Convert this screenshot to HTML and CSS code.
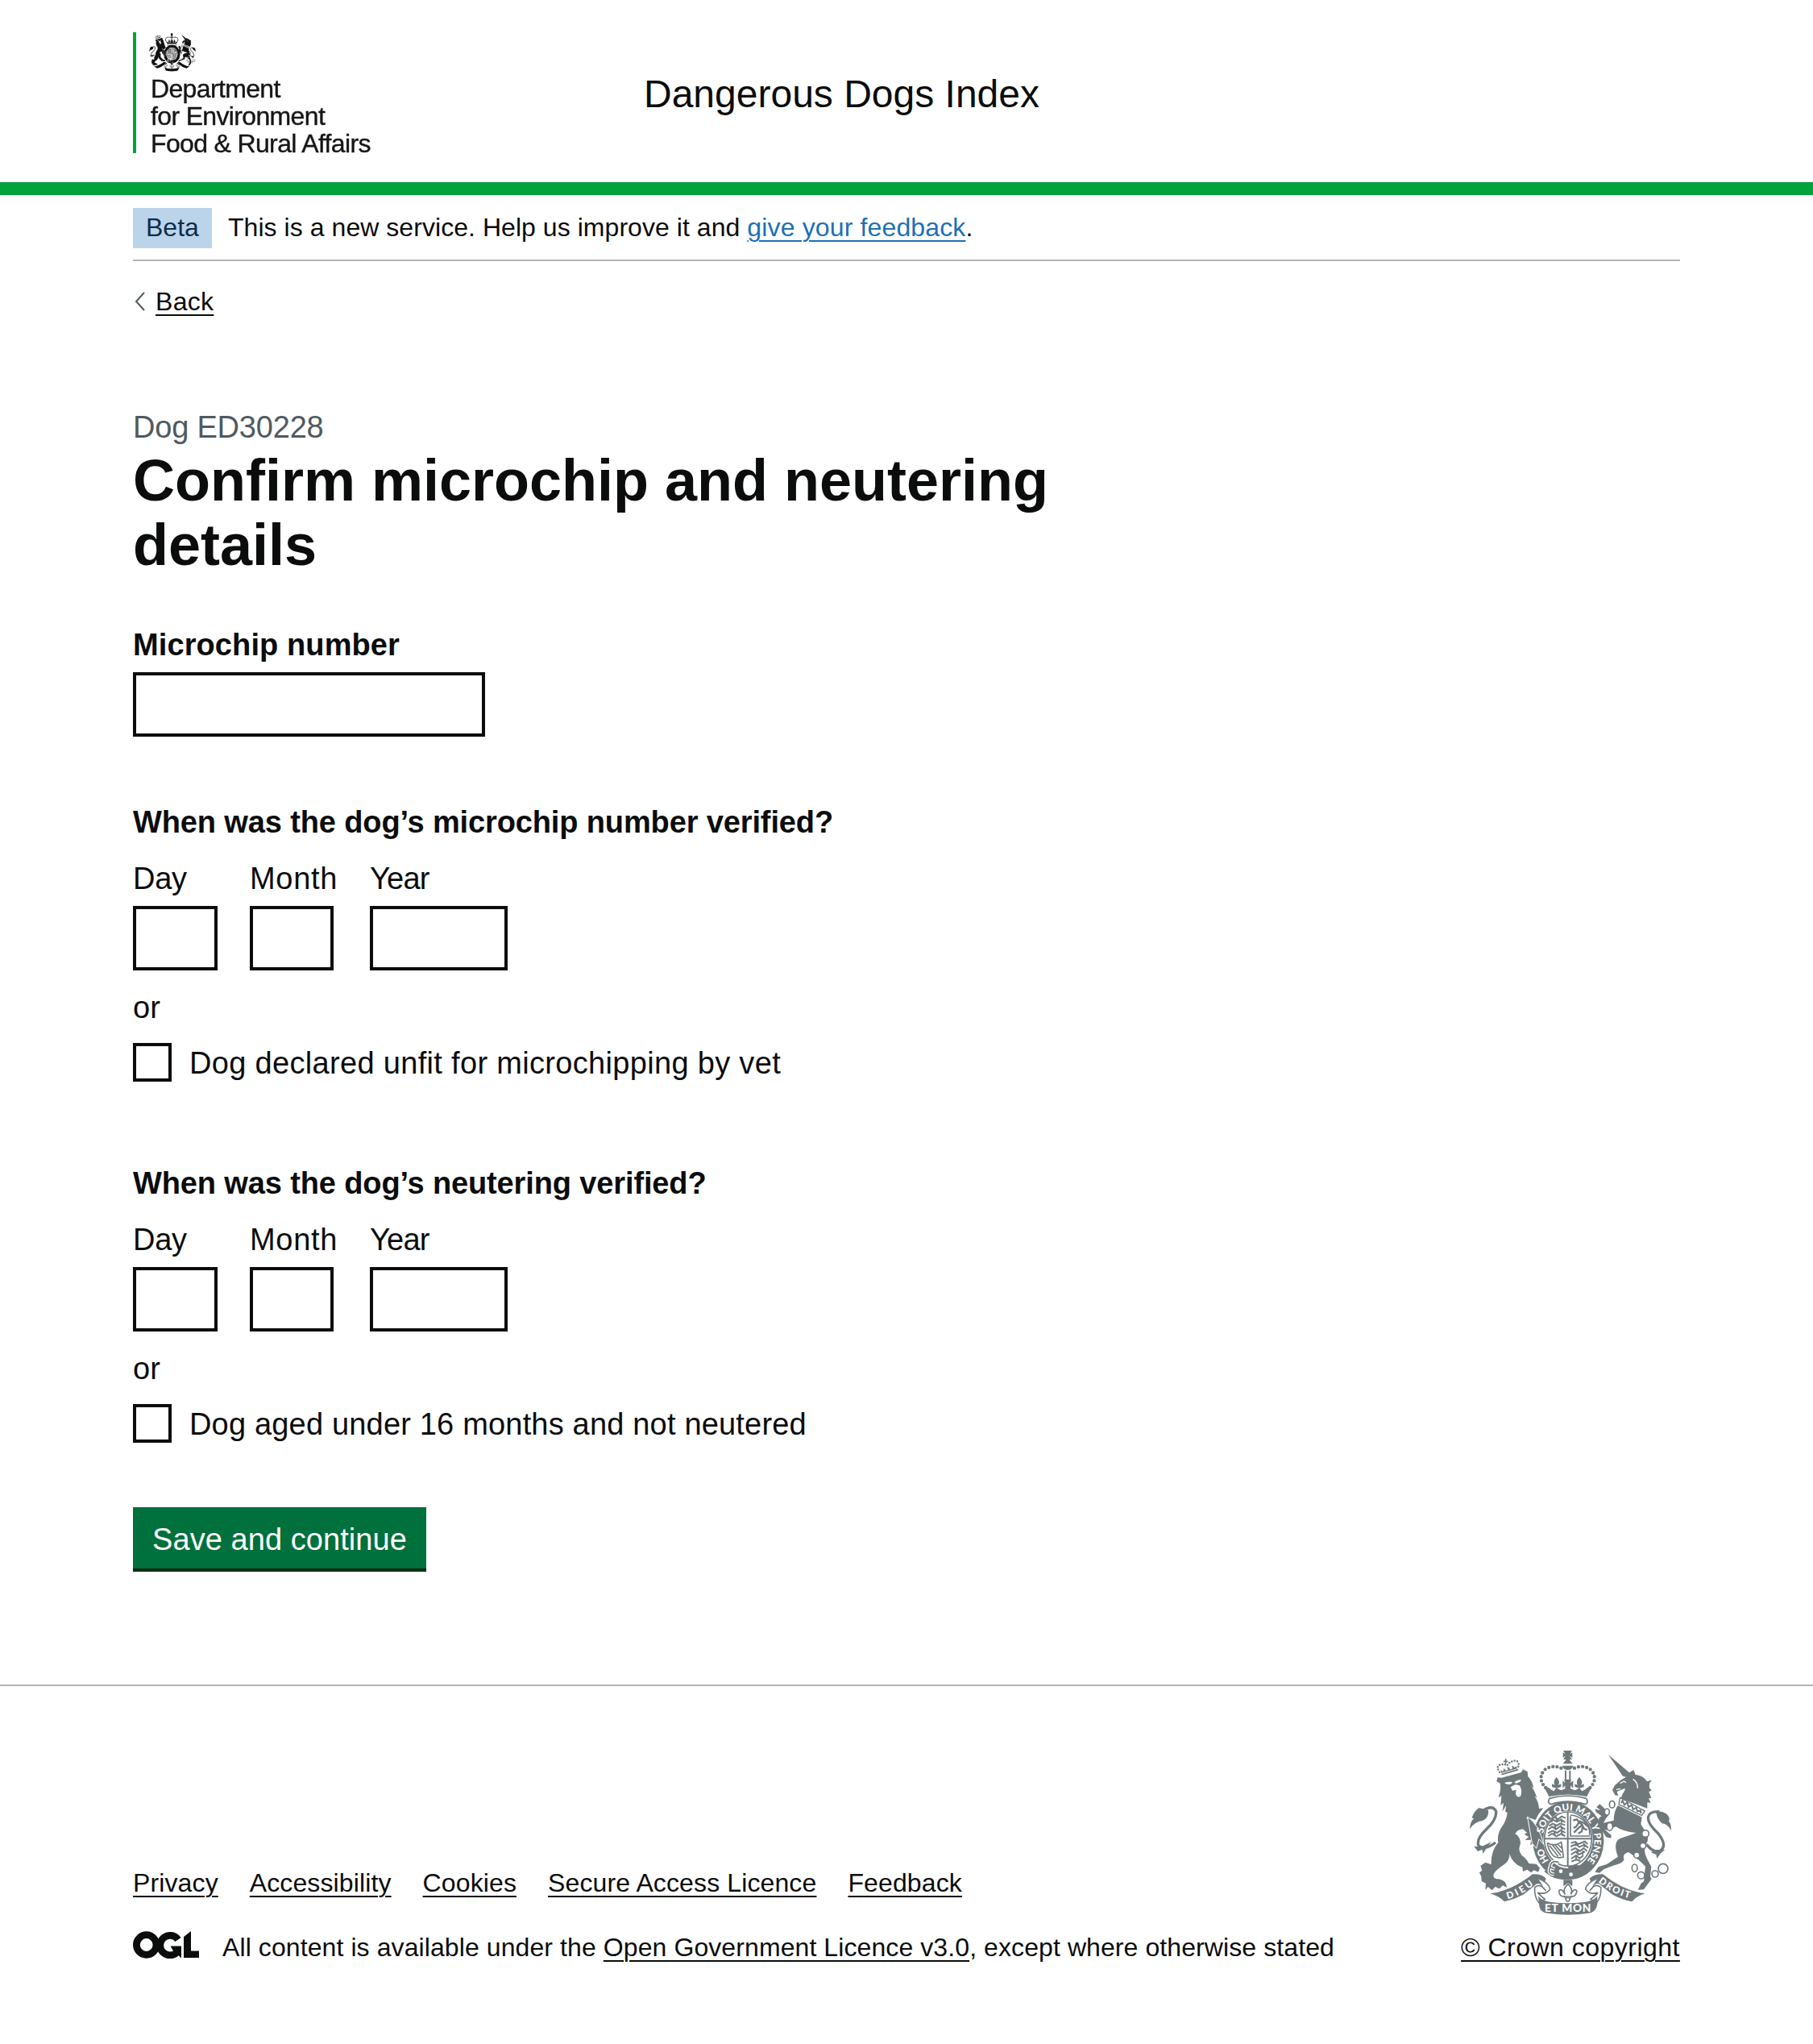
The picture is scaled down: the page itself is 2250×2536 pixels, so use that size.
FILE: index.html
```html
<!DOCTYPE html>
<html lang="en">
<head>
<meta charset="utf-8">
<title>Confirm microchip and neutering details - Dangerous Dogs Index</title>
<link rel="stylesheet" href="styles.css">
</head>
<body>
<svg class="defs" aria-hidden="true">
  <symbol id="arms" viewBox="42 36 750 612">
    <!-- lion -->
    <path fill="currentColor" d="M142 150L146 136L160 137L234 117L240 106L257 114L259 133Q275 148 280 176L270 167Q286 188 292 212L282 203Q299 226 300 252L316 250Q296 272 287 294L258 284Q300 318 311 350L317 378L308 392L297 376L290 398L280 380L268 388L270 368L248 369L262 357L240 346L256 343L240 328Q215 332 213 345Q238 368 228 392Q222 410 236 426Q255 440 262 456L290 458L303 473L297 488L281 481L270 490L256 479L240 486L238 470L220 462Q190 440 189 408Q196 442 170 460Q132 485 130 500Q130 514 150 514Q178 518 180 546L165 538L152 550L137 543L125 556L110 543L100 555L102 530L86 522L85 505L78 490L88 482L82 465L100 452L122 460Q120 410 148 378Q143 352 158 325Q178 300 182 268L174 262L178 240L164 262L168 230L157 240L160 205L149 210Q160 180 155 158Z"/>
    <g fill="#fff"><path d="M171 156Q185 150 201 153L196 160Q182 165 171 156ZM208 153Q220 144 234 144Q230 155 214 158Z"/><path d="M194 172L212 162L228 166L232 175Q238 196 230 207Q216 212 213 196L215 182L201 185Z"/></g>
    <path d="M254 286Q290 305 309 348M212 345L248 348" fill="none" stroke="#fff" stroke-width="4"/>
    <path d="M160 125L222 107" stroke="currentColor" stroke-width="5"/>
    <path fill="currentColor" d="M159 119L157 108L166 114L170 101L176 111L185 107L181 97L190 99L191 106L200 104L200 90L209 99L216 94L219 103Z"/>
    <path d="M153 116Q137 92 158 88L172 86Q176 90 181 91L186 84Q212 65 222 79Q228 92 219 100" fill="none" stroke="currentColor" stroke-width="7.5" stroke-linecap="round" stroke-dasharray="0 10.5"/>
    <path d="M176 66V84M168 76H184" stroke="currentColor" stroke-width="5"/>
    <path d="M85 263Q128 234 140 262Q143 292 105 328Q65 365 75 390Q100 408 138 378" fill="none" stroke="currentColor" stroke-width="10"/>
    <path fill="currentColor" d="M42 328Q44 299 57 289L50 286Q58 260 77 249L111 258Q114 285 90 297Q60 300 42 328ZM58 392L85 394L122 376L104 400L92 419L88 404L72 411Z"/>
    <!-- unicorn -->
    <path fill="currentColor" d="M558 51L636 118L652 108L659 126Q688 128 702 151L720 145Q706 160 712 176L719 184L709 190L718 212L708 214L716 230L703 229L703 251L604 214L612 196Q622 182 620 176L590 189L595 204L583 202L573 183L582 165L606 145L624 134L612 131Z"/>
    <path d="M602 158L616 150L624 155M588 181L604 178M650 142Q668 154 667 176" fill="none" stroke="#fff" stroke-width="4"/>
    <path d="M602 211L694 261L682 277L597 236Z" fill="#fff" stroke="currentColor" stroke-width="4"/>
    <path d="M606 231L611 222L618 238L629 228L633 246L645 238L650 255L662 248L666 262L678 259L679 270" fill="none" stroke="currentColor" stroke-width="6"/>
    <path fill="currentColor" d="M594 240L683 284L679 310Q694 335 704 348Q710 371 695 390Q687 412 707 448L718 468L714 505L719 514L690 553L668 554L680 530L690 523L696 467Q654 426 633 414Q608 421 617 442Q609 458 575 464L541 478L525 491L508 488L521 469L552 459L594 431Q574 379 600 364Q641 350 661 342Q613 338 586 319L554 332L544 329L569 351L568 362L550 358L531 327L516 321L524 285L533 280L512 264L508 253L529 259L514 246L526 235L548 256L559 275L548 290L540 305L578 296Q579 258 594 240Z"/>
    <g fill="#fff" stroke="currentColor" stroke-width="5"><ellipse cx="572" cy="236" rx="10" ry="13"/><ellipse cx="553" cy="264" rx="9" ry="12"/><ellipse cx="563" cy="319" rx="11" ry="15"/><circle cx="696" cy="345" r="13"/><circle cx="687" cy="390" r="11"/><circle cx="664" cy="425" r="11"/><ellipse cx="656" cy="473" rx="10" ry="14"/><circle cx="680" cy="500" r="13"/><circle cx="732" cy="495" r="12"/><circle cx="762" cy="475" r="18"/></g>
    <path d="M748 263Q710 262 707 282Q701 305 744 345Q780 390 750 410Q727 418 700 385" fill="none" stroke="currentColor" stroke-width="10"/>
    <path fill="currentColor" d="M736 267Q752 257 773 271Q790 284 783 299Q792 306 792 333Q778 309 758 307Q740 291 736 267ZM769 406L753 418L739 438L736 423L717 415L737 405Z"/>
    <!-- crown -->
    <path fill="currentColor" d="M390 36H423L415 49L424 43V62L414 56L423 69H390L399 56L389 62V43L398 49ZM403 67H411L425 85H389ZM386 92H428Q423 108 407 108Q391 108 386 92Z"/>
    <path d="M399 110V143M415 110V143" stroke="currentColor" stroke-width="6"/>
    <path d="M382 101Q350 87 320 108Q289 145 335 184M432 101Q464 87 494 108Q525 145 480 184" fill="none" stroke="currentColor" stroke-width="13" stroke-linecap="round" stroke-dasharray="0 15.5"/>
    <path fill="currentColor" d="M322 178Q332 166 344 181L355 187L364 175L381 184L397 178L397 166L388 176V148L398 156L393 143H421L415 156L427 148V176L417 166L418 178L435 184L450 175L460 187L473 180Q483 166 493 177L478 207Q407 192 337 207ZM365 134Q382 154 370 164L382 160V171L366 176L348 171V160L359 164Q350 151 365 134ZM450 134Q467 154 455 164L467 160V171L451 176L433 171V160L444 164Q435 151 450 134Z"/>
    <path fill="#fff" stroke="currentColor" stroke-width="5" d="M339 214Q407 194 476 214Q485 229 474 236Q407 214 342 236Q330 228 339 214Z"/>
    <!-- garter and shield -->
    <ellipse cx="409" cy="370" rx="111" ry="125" fill="none" stroke="currentColor" stroke-width="42"/>
    <path d="M257 282Q299 310 318 386L300 365L290 400L274 380Z" fill="currentColor" stroke="#fff" stroke-width="3"/>
    <ellipse cx="408" cy="365" rx="92" ry="105" fill="#fff"/>
    <ellipse cx="408" cy="365" rx="88" ry="101" fill="none" stroke="currentColor" stroke-width="5"/>
    <path d="M407 265V465M320 364H496" stroke="currentColor" stroke-width="6"/>
    <path id="beasts" fill="none" stroke="currentColor" stroke-width="6" d="M346 291L359 283L370 292L384 281L399 287M343 302L354 294L366 301L382 293L397 303M337 316L351 308L366 315L378 307L397 313M334 330L349 319L363 329L379 318L397 329M333 343L351 334L367 342L381 332L398 342M334 354L349 345L364 355L383 345L397 355M361 280L367 297M382 289L385 304M358 309L361 326M380 313L386 330M356 336L360 354M384 336L387 353"/>
    <path d="M419 380L435 375L446 384L470 374L481 384M418 393L438 384L450 395L469 386L483 398M419 407L435 399L452 410L466 399L479 410M419 423L437 412L447 423L471 412M420 438L438 426L451 437L465 426M421 449L440 441L454 447M438 375L436 391M466 380L470 395M442 403L445 417M464 408L462 424M437 430L439 446" fill="none" stroke="currentColor" stroke-width="6"/>
    <path d="M417 280V354H490M417 276Q470 280 488 333V350" fill="none" stroke="currentColor" stroke-width="5"/>
    <path d="M427 296L441 292L449 303L460 311L468 327L479 331M449 303L438 319L429 324M459 314L445 326L430 341M462 320L459 337L446 344M450 298L466 305L480 317" fill="none" stroke="currentColor" stroke-width="7"/>
    <path d="M331 379Q355 395 383 377L391 432Q365 439 352 426Q334 405 331 379M348 385L381 427M359 386L384 415M369 384L384 399M339 389L371 430" fill="none" stroke="currentColor" stroke-width="5"/>
    <path d="M335 485Q345 500 365 502M322 486L360 471Q425 493 481 485Q409 532 346 503Z" fill="currentColor" stroke="currentColor" stroke-width="4"/>
    <path d="M464 470L438 466L409 473" stroke="currentColor" stroke-width="9"/>
    <g fill="#fff"><circle cx="381" cy="485" r="7"/><circle cx="419" cy="497" r="7"/></g>
    <path d="M374 452Q344 441 342 468Q330 495 356 496M340 470L358 477" fill="none" stroke="#fff" stroke-width="13"/>
    <path d="M374 452Q344 441 342 468Q330 495 356 496M340 470L358 477" fill="none" stroke="currentColor" stroke-width="5"/>
    <!-- scroll -->
    <path fill="currentColor" d="M118 568Q198 558 276 496Q309 494 326 512L314 544Q298 520 281 541L241 572Q207 590 171 598Q149 576 118 568ZM695 568Q613 558 538 496Q507 494 488 512L500 544Q516 520 534 541L574 572Q607 590 646 598Q665 576 695 568Z"/>
    <path fill="#fff" stroke="currentColor" stroke-width="5" d="M296 511Q339 530 341 552Q325 574 295 565Q312 582 322 589L300 603Q281 580 284 545Q302 530 316 547L326 558M518 511Q475 530 473 552Q489 574 519 565Q502 582 492 589L514 603Q533 580 530 545Q512 530 498 547L488 558"/>
    <path fill="currentColor" d="M297 577Q310 596 345 600Q407 608 468 600Q504 596 517 577L517 608Q512 638 483 641Q407 653 332 641Q306 640 301 615Z"/>
    <path fill="currentColor" d="M391 517H424V541L408 529L391 541Z"/>
    <path fill="#fff" stroke="currentColor" stroke-width="5" d="M408 533Q429 552 418 571Q431 546 441 558Q437 582 421 578L410 595H404L394 578Q377 582 374 558Q384 546 397 571Q386 552 408 533ZM392 579H424"/>
    <circle cx="407" cy="590" r="7" fill="#fff" stroke="currentColor" stroke-width="4"/>
  </symbol>
</svg>

<header class="header">
  <div class="container header-row">
    <div class="logo">
      <div class="logo-art">
        <svg class="logo-arms"><use href="#arms"/></svg>
        <div class="logo-text">Department<br>for Environment<br>Food &amp; Rural Affairs</div>
      </div>
    </div>
    <div class="service-name">Dangerous Dogs Index</div>
  </div>
</header>

<div class="container">
  <div class="phase-banner">
    <strong class="tag">Beta</strong>
    <span class="phase-text">This is a new service. Help us improve it and <a class="link" href="#">give your feedback</a>.</span>
  </div>
  <div class="back">
    <svg class="chevron" viewBox="0 0 14 24"><path d="M12 1L2 12L12 23" fill="none" stroke="#505a5f" stroke-width="2"/></svg>
    <a class="back-link" href="#">Back</a>
  </div>

  <main class="main">
    <span class="caption">Dog ED30228</span>
    <h1 class="heading">Confirm microchip and neutering details</h1>

    <form>
      <label class="label-bold" for="chip">Microchip number</label>
      <input class="input input-chip" id="chip" type="text">

      <section class="question question-chip">
        <h2 class="legend">When was the dog’s microchip number verified?</h2>
        <div class="date">
          <label class="date-item">Day<input class="input input-2" type="text"></label>
          <label class="date-item month">Month<input class="input input-2" type="text"></label>
          <label class="date-item year">Year<input class="input input-4" type="text"></label>
        </div>
        <p class="or">or</p>
        <label class="check check-vet"><input class="box" type="checkbox"><span>Dog declared unfit for microchipping by vet</span></label>
      </section>

      <section class="question question-neuter">
        <h2 class="legend">When was the dog’s neutering verified?</h2>
        <div class="date">
          <label class="date-item">Day<input class="input input-2" type="text"></label>
          <label class="date-item month">Month<input class="input input-2" type="text"></label>
          <label class="date-item year">Year<input class="input input-4" type="text"></label>
        </div>
        <p class="or">or</p>
        <label class="check"><input class="box" type="checkbox"><span>Dog aged under 16 months and not neutered</span></label>
      </section>

      <button class="button" type="button">Save and continue</button>
    </form>
  </main>
</div>

<footer class="footer">
  <div class="container footer-row">
    <div class="footer-meta">
      <nav class="footer-links"><a href="#">Privacy</a><a href="#">Accessibility</a><a href="#">Cookies</a><a href="#">Secure Access Licence</a><a href="#">Feedback</a></nav>
      <div class="licence">
        <svg class="ogl" viewBox="0 0 82 34" role="img" aria-label="OGL">
          <circle cx="16.7" cy="17" r="12.3" fill="none" stroke="#0b0c0c" stroke-width="8.8"/>
          <path d="M56 10.5A12.3 12.3 0 1 0 55 26" fill="none" stroke="#0b0c0c" stroke-width="8.8"/>
          <path d="M46.5 18.5H60V33.5L54.5 28L50 24.5ZM63 7L72 0V24.5H82V33H63Z" fill="#0b0c0c"/>
        </svg>
        <span class="licence-text">All content is available under the <a href="#">Open Government Licence v3.0</a>, except where otherwise stated</span>
      </div>
    </div>
    <div class="copyright">
      <svg class="footer-arms" viewBox="42 36 750 612">
        <use href="#arms" x="42" y="36" width="750" height="612"/>
        <path id="garter" fill="none" d="M314.5 345A97 111 0 1 1 472 454"/>
        <path id="garter-start" fill="none" d="M337 446A97 111 0 0 1 314 393"/>
        <path id="dieu" fill="none" d="M183 588Q235 576 288 529"/>
        <path id="droit" fill="none" d="M520 525Q582 576 648 587"/>
        <g class="motto">
          <text><textPath href="#garter-start" textLength="52">HO</textPath></text>
          <text><textPath href="#garter" textLength="386">SOIT QUI MAL Y PENSE</textPath></text>
          <text><textPath href="#dieu" textLength="111">DIEU</textPath></text>
          <text><textPath href="#droit" textLength="132">DROIT</textPath></text>
          <text class="motto-base" x="321" y="637" textLength="172">ET MON</text>
        </g>
      </svg>
      <a href="#">© Crown copyright</a>
    </div>
  </div>
</footer>
</body>
</html>
```
FILE: styles.css
```css
*, *::before, *::after { box-sizing: border-box; }

body {
  margin: 0;
  background: #fff;
  color: #0b0c0c;
  font: 38px/50px "Liberation Sans", Arial, sans-serif;
}

a {
  color: inherit;
  text-decoration: underline;
  text-decoration-thickness: 2px;
  text-underline-offset: 5px;
}

.defs { display: block; width: 0; height: 0; }

.motto {
  fill: #fff;
  font-family: Lato, sans-serif;
  font-size: 35px;
  font-weight: 900;
  letter-spacing: 0;
}
.motto-base { font-size: 41px; }

.container { width: 1920px; margin: 0 auto; }

.header { height: 242px; padding-top: 40px; border-bottom: 16px solid #00a33b; }
.header-row { display: grid; grid-template-columns: 634px 1fr; }
.logo { height: 150px; padding-left: 16px; border-left: 4px solid #00a33b; }
.logo-art { width: 277px; filter: blur(0.6px); }
.logo-arms { display: block; width: 58px; height: 50px; color: #111; }
.logo-text {
  margin: 3px 0 0 2px;
  color: #161616;
  font-size: 32px;
  line-height: 34px;
  letter-spacing: -0.65px;
  white-space: nowrap;
  -webkit-text-stroke: 0.4px #161616;
}
.service-name { padding-top: 47px; font-size: 48px; line-height: 60px; }

.phase-banner {
  display: flex;
  gap: 20px;
  height: 82px;
  padding-top: 16px;
  border-bottom: 2px solid #b1b4b6;
  font-size: 32px;
  line-height: 40px;
}
.tag {
  width: 98px;
  height: 50px;
  padding: 4px 16px 6px;
  background: #bbd4ea;
  color: #0c2d4a;
  font-weight: 400;
}
.phase-text { padding-top: 4px; letter-spacing: 0.05px; }
.link { color: #1d70b8; letter-spacing: 0.14px; }

.back {
  display: flex;
  gap: 12px;
  margin-top: 30px;
  padding-left: 2px;
  font-size: 32px;
  line-height: 40px;
}
.chevron { width: 14px; height: 24px; margin-top: 8px; }
.back-link { letter-spacing: 0.3px; }

.main { width: 1240px; padding: 111px 0 140px; }
.caption { display: block; color: #505a5f; letter-spacing: -0.2px; }
.heading { margin: 1px 0 59px; font-size: 72px; line-height: 80px; }

.label-bold { display: block; font-weight: 700; letter-spacing: 0.1px; }
.input {
  display: block;
  height: 80px;
  margin: 9px 0 0;
  padding: 8px;
  border: 4px solid #0b0c0c;
  border-radius: 0;
  background: #fff;
  font: inherit;
}
.input-chip { width: 437px; }
.input-2 { width: 105px; }
.input-4 { width: 171px; }

.question-chip { margin-top: 81px; }
.question-neuter { margin-top: 101px; }
.legend { margin: 0 0 20px; font-size: 38px; line-height: 50px; letter-spacing: -0.13px; }
.date { display: flex; gap: 40px; }
.date-item { display: block; letter-spacing: -0.3px; }
.month { width: 109px; letter-spacing: 0.68px; }
.month .input { width: 104px; }
.year { letter-spacing: -0.8px; }
.or { margin: 21px 0 19px; }
.check { display: flex; gap: 22px; height: 48px; letter-spacing: 0.18px; }
.check-vet { letter-spacing: 0.32px; }
.box {
  appearance: none;
  width: 48px;
  height: 48px;
  margin: 0;
  border: 4px solid #0b0c0c;
}

.button {
  display: block;
  width: 364px;
  height: 80px;
  margin-top: 80px;
  padding: 15px 23px 11px;
  border: 0;
  border-bottom: 4px solid #002d18;
  border-radius: 0;
  background: #00703c;
  color: #fff;
  font: inherit;
  letter-spacing: 0.06px;
  white-space: nowrap;
}

.footer {
  height: 446px;
  padding-top: 80px;
  border-top: 2px solid #b1b4b6;
  font-size: 32px;
  line-height: 40px;
  letter-spacing: 0.12px;
}
.footer-row { display: flex; justify-content: space-between; align-items: flex-end; }
.footer-links { display: flex; gap: 39px; margin-bottom: 40px; }
.licence { display: flex; gap: 29px; }
.licence-text { letter-spacing: 0.09px; }
.ogl { width: 82px; height: 34px; }
.copyright {
  display: flex;
  flex-direction: column;
  align-items: center;
  gap: 20px;
  width: 272px;
  letter-spacing: 0.48px;
  white-space: nowrap;
}
.footer-arms { display: block; width: 250px; height: 204px; color: #6f797c; }
```
